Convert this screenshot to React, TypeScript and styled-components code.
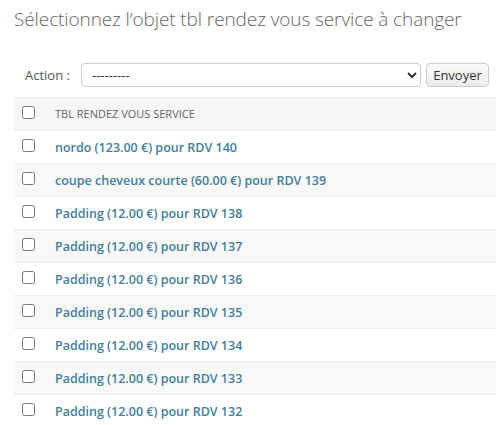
import styled, { createGlobalStyle } from "styled-components";

const GlobalStyle = createGlobalStyle`
  body {
    margin: 0;
    background: #fff;
    font-family: "Open Sans", "Noto Sans", sans-serif;
    color: #333;
  }
`;

const rows = [
  "nordo (123.00 €) pour RDV 140",
  "coupe cheveux courte (60.00 €) pour RDV 139",
  "Padding (12.00 €) pour RDV 138",
  "Padding (12.00 €) pour RDV 137",
  "Padding (12.00 €) pour RDV 136",
  "Padding (12.00 €) pour RDV 135",
  "Padding (12.00 €) pour RDV 134",
  "Padding (12.00 €) pour RDV 133",
  "Padding (12.00 €) pour RDV 132",
];

export default function App() {
  return (
    <>
      <GlobalStyle />
      <Page>
        <Title>Sélectionnez l’objet tbl rendez vous service à changer</Title>
        <Actions>
          <Label>Action :</Label>
          <Select defaultValue="">
            <option value="">---------</option>
          </Select>
          <Button type="button">Envoyer</Button>
        </Actions>
        <Table>
          <thead>
            <HeadRow>
              <CheckCell>
                <Box type="checkbox" />
              </CheckCell>
              <HeadCell>TBL RENDEZ VOUS SERVICE</HeadCell>
            </HeadRow>
          </thead>
          <tbody>
            {rows.map((r, i) => (
              <Row key={r} $alt={i % 2 === 1}>
                <CheckCell>
                  <Box type="checkbox" />
                </CheckCell>
                <Cell>
                  <Link href="#">{r}</Link>
                </Cell>
              </Row>
            ))}
          </tbody>
        </Table>
      </Page>
    </>
  );
}

const Page = styled.div`
  padding: 0 0 0 14px;
  overflow: hidden;
`;

const Title = styled.h1`
  margin: 0;
  padding-top: 6px;
  height: 46px;
  font-size: 19px;
  font-weight: 300;
  color: #666;
  letter-spacing: -0.1px;
  white-space: nowrap;
`;

const Actions = styled.div`
  display: flex;
  align-items: center;
  gap: 5px;
  height: 24px;
  margin-top: 11px;
  padding-left: 11px;
`;

const Label = styled.span`
  font-size: 13px;
  color: #555;
  width: 51px;
`;

const Select = styled.select`
  width: 340px;
  height: 24px;
  border: 1px solid #ccc;
  border-radius: 4px;
  background: #fff;
  font-family: inherit;
  font-size: 13px;
  color: #333;
  padding: 0 6px;
`;

const Button = styled.button`
  height: 24px;
  width: 63px;
  padding: 0;
  border: 1px solid #ccc;
  border-radius: 4px;
  background: linear-gradient(#fafafa, #ececec);
  font-family: inherit;
  font-size: 13px;
  color: #333;
`;

const Table = styled.table`
  margin-top: 10px;
  width: calc(100% + 20px);
  border-collapse: collapse;
  border-top: 1px solid #eee;
`;

const HeadRow = styled.tr`
  background: #f6f6f6;
  height: 33px;
  border-bottom: 1px solid #eee;
`;

const Row = styled.tr<{ $alt: boolean }>`
  background: ${(p) => (p.$alt ? "#f8f8f8" : "#fff")};
  height: 33px;
  border-bottom: 1px solid #eee;
`;

const CheckCell = styled.td`
  width: 31px;
  padding: 0 0 0 8px;
  vertical-align: middle;
`;

const Box = styled.input`
  margin: 0;
  width: 13px;
  height: 13px;
  display: block;
  transform: translateY(-2px);
`;

const HeadCell = styled.th`
  text-align: left;
  font-size: 11px;
  font-weight: 400;
  color: #666;
  padding: 0 0 2px 2px;
`;

const Cell = styled.td`
  padding: 0 0 3px 2px;
`;

const Link = styled.a`
  font-size: 12.5px;
  font-weight: 600;
  color: #447e9b;
  text-decoration: none;
`;
